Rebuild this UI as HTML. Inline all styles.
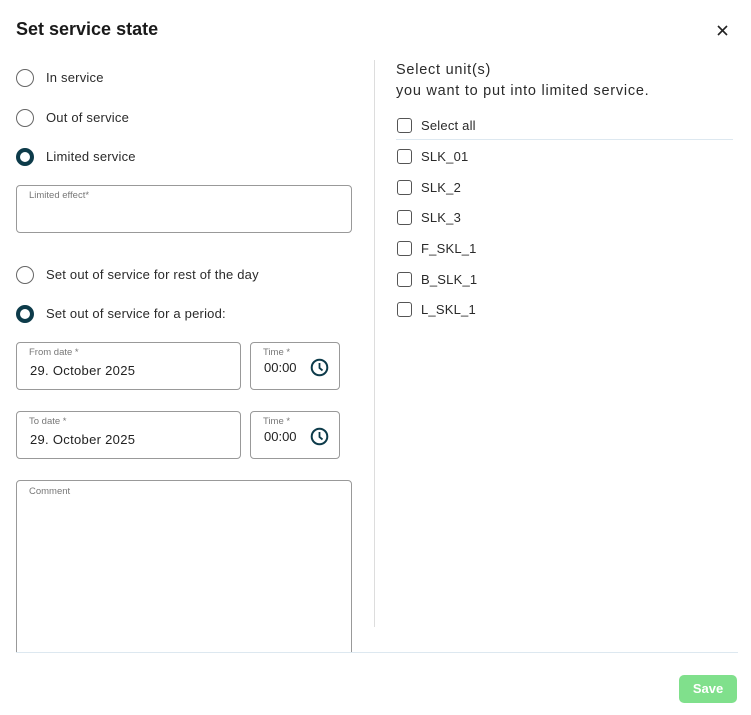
<!DOCTYPE html>
<html><head><style>
*{box-sizing:border-box;margin:0;padding:0}
body{width:751px;height:715px;background:#fff;font-family:"Liberation Sans",sans-serif;color:#222;position:relative;overflow:hidden}
.a{position:absolute}
.t{font-size:13px;color:#2a2a2a;letter-spacing:.2px}
.radio{position:absolute;width:18px;height:18px;border:1.5px solid #666;border-radius:50%}
.radio.on{border:4.5px solid #0d3b4a}
.box{position:absolute;border:1px solid #999;border-radius:4px}
.lbl{position:absolute;font-size:9.5px;color:#777}
.val{position:absolute;font-size:13px;color:#222;letter-spacing:.3px}
.cb{position:absolute;width:15px;height:15px;border:1.5px solid #555;border-radius:3px}
</style></head><body>
<div class="a" style="left:16px;top:19px;font-size:18px;font-weight:bold;color:#1a1a1a">Set service state</div>
<svg class="a" style="left:717px;top:25px" width="11" height="11"><path d="M1 1L10 10M10 1L1 10" stroke="#222" stroke-width="1.6"/></svg>

<div class="radio" style="left:16px;top:69px"></div><div class="a t" style="left:46px;top:70px">In service</div>
<div class="radio" style="left:16px;top:109px"></div><div class="a t" style="left:46px;top:110px">Out of service</div>
<div class="radio on" style="left:16px;top:148px"></div><div class="a t" style="left:46px;top:149px">Limited service</div>

<div class="box" style="left:16px;top:185px;width:336px;height:48px"></div>
<div class="lbl" style="left:29px;top:190px">Limited effect*</div>

<div class="radio" style="left:16px;top:266px"></div><div class="a t" style="left:46px;top:267px">Set out of service for rest of the day</div>
<div class="radio on" style="left:16px;top:305px"></div><div class="a t" style="left:46px;top:306px">Set out of service for a period:</div>

<div class="box" style="left:16px;top:342px;width:225px;height:48px"></div>
<div class="lbl" style="left:29px;top:347px">From date *</div>
<div class="val" style="left:30px;top:363px">29. October 2025</div>
<div class="box" style="left:250px;top:342px;width:90px;height:48px"></div>
<div class="lbl" style="left:263px;top:347px">Time *</div>
<div class="val" style="left:264px;top:360px;letter-spacing:0">00:00</div>
<svg class="a" style="left:310px;top:358px" width="19" height="19"><circle cx="9.5" cy="9.5" r="7.8" fill="none" stroke="#0d3b4a" stroke-width="2"/><path d="M9.5 5V10L12.5 12.5" fill="none" stroke="#0d3b4a" stroke-width="1.8"/></svg>

<div class="box" style="left:16px;top:411px;width:225px;height:48px"></div>
<div class="lbl" style="left:29px;top:416px">To date *</div>
<div class="val" style="left:30px;top:432px">29. October 2025</div>
<div class="box" style="left:250px;top:411px;width:90px;height:48px"></div>
<div class="lbl" style="left:263px;top:416px">Time *</div>
<div class="val" style="left:264px;top:429px;letter-spacing:0">00:00</div>
<svg class="a" style="left:310px;top:427px" width="19" height="19"><circle cx="9.5" cy="9.5" r="7.8" fill="none" stroke="#0d3b4a" stroke-width="2"/><path d="M9.5 5V10L12.5 12.5" fill="none" stroke="#0d3b4a" stroke-width="1.8"/></svg>

<div class="box" style="left:16px;top:480px;width:336px;height:190px"></div>
<div class="lbl" style="left:29px;top:486px">Comment</div>

<div class="a" style="left:374px;top:60px;width:1px;height:567px;background:#ddd"></div>

<div class="a" style="left:396px;top:60px;font-size:14.5px;line-height:21px;color:#2a2a2a;letter-spacing:.75px">Select unit(s)<br>you want to put into limited service.</div>
<div class="cb" style="left:397px;top:118px"></div><div class="a t" style="left:421px;top:118px">Select all</div>
<div class="a" style="left:396px;top:139px;width:337px;height:1px;background:#dde8f0"></div>
<div class="cb" style="left:397px;top:149px"></div><div class="a t" style="left:421px;top:149px">SLK_01</div>
<div class="cb" style="left:397px;top:180px"></div><div class="a t" style="left:421px;top:180px">SLK_2</div>
<div class="cb" style="left:397px;top:210px"></div><div class="a t" style="left:421px;top:210px">SLK_3</div>
<div class="cb" style="left:397px;top:241px"></div><div class="a t" style="left:421px;top:241px">F_SKL_1</div>
<div class="cb" style="left:397px;top:272px"></div><div class="a t" style="left:421px;top:272px">B_SLK_1</div>
<div class="cb" style="left:397px;top:302px"></div><div class="a t" style="left:421px;top:302px">L_SKL_1</div>

<div class="a" style="left:0;top:652px;width:751px;height:63px;background:#fff"></div>
<div class="a" style="left:16px;top:652px;width:722px;height:1px;background:#dde8f0"></div>
<div class="a" style="left:679px;top:675px;width:58px;height:28px;background:#80e08c;border-radius:5px;color:#fff;font-weight:bold;font-size:13px;text-align:center;line-height:28px">Save</div>
</body></html>
